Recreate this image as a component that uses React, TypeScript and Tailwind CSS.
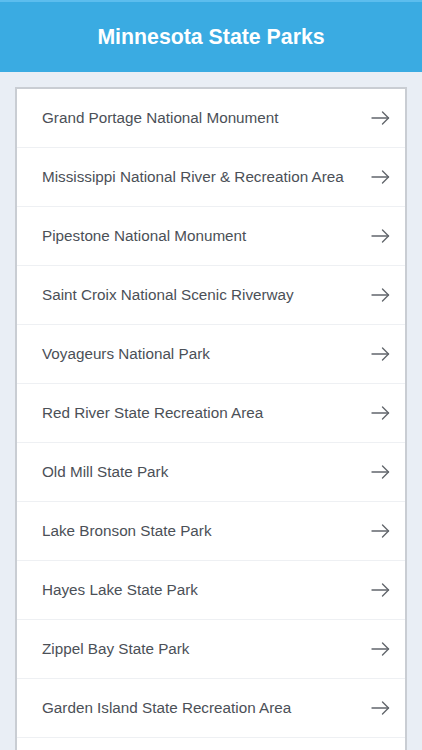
import React from "react";

const parks = [
  "Grand Portage National Monument",
  "Mississippi National River & Recreation Area",
  "Pipestone National Monument",
  "Saint Croix National Scenic Riverway",
  "Voyageurs National Park",
  "Red River State Recreation Area",
  "Old Mill State Park",
  "Lake Bronson State Park",
  "Hayes Lake State Park",
  "Zippel Bay State Park",
  "Garden Island State Recreation Area",
];

function Arrow() {
  return (
    <svg width="19" height="14" viewBox="0 0 19 14" fill="none" stroke="#62666c" strokeWidth="1.4" strokeLinecap="round" strokeLinejoin="round">
      <path d="M1 7H17.5" />
      <path d="M11.5 1L17.5 7L11.5 13" />
    </svg>
  );
}

export default function App() {
  return (
    <div className="w-[422px] h-[750px] overflow-hidden bg-[#e9eef5] flex flex-col" style={{ fontFamily: '"Liberation Sans", Arial, sans-serif' }}>
      <div className="h-[72px] shrink-0 bg-[#3aabe2] border-t-2 border-[#5cbdee] flex items-center justify-center">
        <h1 className="text-white text-[21.3px] font-bold pt-[2px]">Minnesota State Parks</h1>
      </div>
      <div className="px-[15px] pt-[15px]">
        <div className="bg-white border-x-2 border-t-2 border-[#c9cdd3]">
          {parks.map((p) => (
            <div key={p} className="h-[59px] flex items-center justify-between pl-[25px] pr-[15px] border-b border-[#eef0f3]">
              <span className="text-[15.25px] text-[#4b5057]">{p}</span>
              <Arrow />
            </div>
          ))}
          <div className="h-[59px]" />
        </div>
      </div>
    </div>
  );
}
